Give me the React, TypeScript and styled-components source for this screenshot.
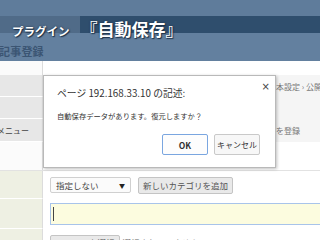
import React from "react";
import styled, { createGlobalStyle } from "styled-components";

const Global = createGlobalStyle`
  html, body { margin: 0; padding: 0; }
  body {
    width: 320px; height: 240px; overflow: hidden; background: #ffffff;
    font-family: "Noto Sans CJK JP", "Noto Sans", sans-serif;
  }
`;

const Page = styled.div`
  position: relative;
  width: 320px;
  height: 240px;
  overflow: hidden;
`;

const Header = styled.header`
  height: 61px;
  background: #63809f;
  display: flex;
  flex-direction: column;
`;

const TopStrip = styled.div`
  height: 16px;
  background: #5f7c9b;
`;

const Band = styled.div`
  height: 17px;
  background: #2f4e6d;
  display: flex;
  align-items: flex-start;
  overflow: visible;
`;

const BandTab = styled.div`
  width: 80px;
  height: 17px;
  background: #506b88;
  flex: none;
`;

const Title = styled.div`
  display: flex;
  align-items: baseline;
  margin-left: -68px;
  margin-top: 4px;
  color: #ffffff;
  font-weight: 700;
  white-space: nowrap;
  text-shadow: 0 0 2px #1d3148, 1px 1px 1px #1d3148;
`;

const TitleSmall = styled.span`
  font-size: 11.5px;
  line-height: 16px;
`;

const TitleBig = styled.span`
  font-size: 17px;
  line-height: 18px;
  margin-left: 11px;
`;

const SubTitle = styled.div`
  margin-top: 12px;
  margin-left: -1px;
  font-size: 11px;
  line-height: 12px;
  font-weight: 700;
  color: #3b5573;
  letter-spacing: 0.2px;
`;

const Body = styled.div`
  display: flex;
  flex-direction: column;
`;

const Row = styled.div<{ $h: number; $line?: boolean }>`
  display: grid;
  grid-template-columns: 43px 1fr;
  height: ${(p) => p.$h}px;
  border-bottom: ${(p) => (p.$line ? "1px solid #e2e2e2" : "none")};
`;

const LeftCell = styled.div<{ $tone: "white" | "gray" | "beige" }>`
  background: ${(p) =>
    p.$tone === "gray" ? "#e7e7e7" : p.$tone === "beige" ? "#eef0e3" : "#fbfbfb"};
  border-right: 1px solid #dcdcdc;
  border-bottom: ${(p) => (p.$tone === "white" ? "none" : "1px solid #ffffff")};
  font-size: 8px;
  color: #444;
  display: flex;
  align-items: center;
  white-space: nowrap;
  overflow: hidden;
`;

const MenuLabel = styled.span`
  margin-left: -3px;
`;

const RightCell = styled.div<{ $bg?: string }>`
  background: ${(p) => p.$bg || "#ffffff"};
  display: flex;
  align-items: center;
  gap: 7px;
  padding-left: 7px;
  white-space: nowrap;
  overflow: hidden;
`;

const Crumb = styled.span<{ $offset: number }>`
  margin-left: ${(p) => p.$offset}px;
  font-size: 8px;
  color: #777;
`;

const Select = styled.div`
  width: 81px;
  height: 16px;
  border: 1px solid #d0d0d0;
  border-radius: 2px;
  background: #fbfbfb;
  display: flex;
  align-items: center;
  justify-content: space-between;
  padding: 0 5px;
  box-sizing: border-box;
  font-size: 8.5px;
  color: #444;
`;

const Arrow = styled.span`
  font-size: 6px;
  color: #222;
`;

const GrayButton = styled.div`
  height: 17px;
  border: 1px solid #c4c4c4;
  border-radius: 2px;
  background: #e9e9e9;
  padding: 0 4px;
  display: flex;
  align-items: center;
  font-size: 8.5px;
  color: #555;
  box-sizing: border-box;
`;

const TextInput = styled.div`
  flex: 1;
  height: 22px;
  margin-right: -4px;
  background: #fcfcdf;
  border: 1px solid #a8c4ea;
  box-sizing: border-box;
  display: flex;
  align-items: center;
  padding-left: 2px;
`;

const Caret = styled.span`
  width: 1px;
  height: 14px;
  background: #444;
`;

const FileBtn = styled(GrayButton)`
  margin-top: 6px;
  height: 15px;
`;

const Muted = styled.span`
  margin-top: 6px;
  font-size: 8.5px;
  color: #666;
  margin-left: -4px;
`;

const Dialog = styled.div`
  position: absolute;
  left: 43px;
  top: 75px;
  width: 233px;
  height: 93px;
  box-sizing: border-box;
  background: #ffffff;
  border: 1px solid #b9b9b9;
  box-shadow: 1px 1px 3px rgba(0, 0, 0, 0.25);
  display: flex;
  flex-direction: column;
  padding: 6px 0 0 13px;
`;

const DialogHead = styled.div`
  display: flex;
  justify-content: space-between;
  align-items: flex-start;
`;

const DialogTitle = styled.div`
  font-size: 9.8px;
  line-height: 14px;
  margin-top: 4px;
  color: #333;
`;

const Close = styled.span`
  font-size: 10px;
  line-height: 10px;
  color: #444;
  margin-right: 5px;
  font-family: "DejaVu Sans", sans-serif;
`;

const Message = styled.div`
  margin-top: 11px;
  font-size: 7.3px;
  line-height: 10px;
  color: #333;
`;

const Buttons = styled.div`
  display: flex;
  justify-content: flex-end;
  gap: 6px;
  margin-top: 13px;
  padding-right: 15px;
`;

const DlgButton = styled.div<{ $primary?: boolean }>`
  width: 46px;
  height: 21px;
  box-sizing: border-box;
  border: 1px solid ${(p) => (p.$primary ? "#7aa6e0" : "#c9c9c9")};
  border-radius: 2px;
  background: ${(p) => (p.$primary ? "#fdfdfd" : "#f7f7f7")};
  display: flex;
  align-items: center;
  justify-content: center;
  font-size: ${(p) => (p.$primary ? "8.5px" : "8px")};
  font-weight: ${(p) => (p.$primary ? 700 : 400)};
  color: #333;
`;

export default function App() {
  return (
    <Page>
      <Global />
      <Header>
        <TopStrip />
        <Band>
          <BandTab />
          <Title>
            <TitleSmall>プラグイン</TitleSmall>
            <TitleBig>『自動保存』</TitleBig>
          </Title>
        </Band>
        <SubTitle>記事登録</SubTitle>
      </Header>
      <Body>
        <Row $h={14}>
          <LeftCell $tone="white" />
          <RightCell />
        </Row>
        <Row $h={22}>
          <LeftCell $tone="gray" />
          <RightCell $bg="#f5f5f5">
            <Crumb $offset={218}>基本設定 › 公開設定</Crumb>
          </RightCell>
        </Row>
        <Row $h={22}>
          <LeftCell $tone="gray" />
          <RightCell $bg="#f5f5f5" />
        </Row>
        <Row $h={23}>
          <LeftCell $tone="gray">
            <MenuLabel>メニュー</MenuLabel>
          </LeftCell>
          <RightCell $bg="#f5f5f5">
            <Crumb $offset={194}>新規記事を登録</Crumb>
          </RightCell>
        </Row>
        <Row $h={28} $line>
          <LeftCell $tone="white" />
          <RightCell />
        </Row>
        <Row $h={28}>
          <LeftCell $tone="beige" />
          <RightCell>
            <Select>
              <span>指定しない</span>
              <Arrow>▼</Arrow>
            </Select>
            <GrayButton>新しいカテゴリを追加</GrayButton>
          </RightCell>
        </Row>
        <Row $h={30}>
          <LeftCell $tone="beige" />
          <RightCell>
            <TextInput>
              <Caret />
            </TextInput>
          </RightCell>
        </Row>
        <Row $h={20}>
          <LeftCell $tone="beige" />
          <RightCell>
            <FileBtn>ファイルを選択</FileBtn>
            <Muted>選択されていません</Muted>
          </RightCell>
        </Row>
      </Body>
      <Dialog>
        <DialogHead>
          <DialogTitle>ページ 192.168.33.10 の記述:</DialogTitle>
          <Close>×</Close>
        </DialogHead>
        <Message>自動保存データがあります。復元しますか？</Message>
        <Buttons>
          <DlgButton $primary>OK</DlgButton>
          <DlgButton>キャンセル</DlgButton>
        </Buttons>
      </Dialog>
    </Page>
  );
}
